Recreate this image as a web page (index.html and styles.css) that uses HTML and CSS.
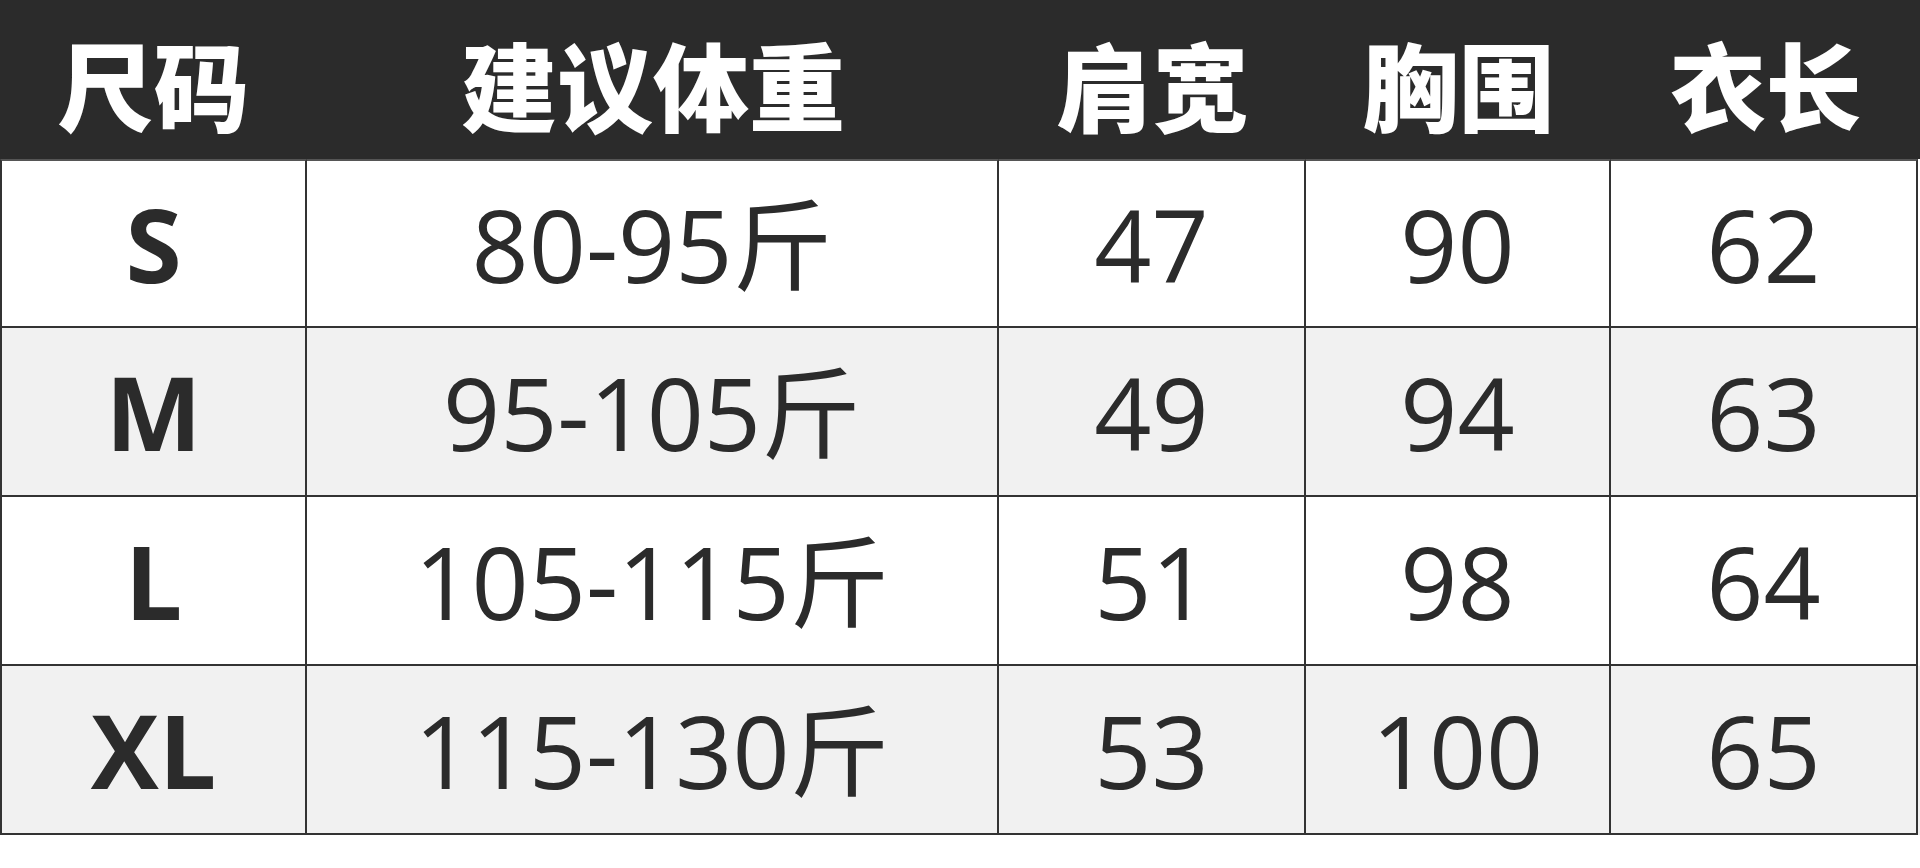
FILE: index.html
```html
<!DOCTYPE html>
<html lang="zh-CN">
<head>
<meta charset="utf-8">
<title>尺码表</title>
<link rel="stylesheet" href="styles.css">
</head>
<body>
<div class="sheet">
  <div class="row head">
    <div class="cell">尺码</div>
    <div class="cell">建议体重</div>
    <div class="cell">肩宽</div>
    <div class="cell">胸围</div>
    <div class="cell">衣长</div>
  </div>
  <div class="row body">
    <div class="cell size">S</div>
    <div class="cell num">80-95斤</div>
    <div class="cell num">47</div>
    <div class="cell num">90</div>
    <div class="cell num">62</div>
  </div>
  <div class="row body alt">
    <div class="cell size">M</div>
    <div class="cell num">95-105斤</div>
    <div class="cell num">49</div>
    <div class="cell num">94</div>
    <div class="cell num">63</div>
  </div>
  <div class="row body">
    <div class="cell size">L</div>
    <div class="cell num">105-115斤</div>
    <div class="cell num">51</div>
    <div class="cell num">98</div>
    <div class="cell num">64</div>
  </div>
  <div class="row body alt">
    <div class="cell size">XL</div>
    <div class="cell num">115-130斤</div>
    <div class="cell num">53</div>
    <div class="cell num">100</div>
    <div class="cell num">65</div>
  </div>
</div>
</body>
</html>
```

FILE: styles.css
```css
html, body {
  margin: 0;
  padding: 0;
  background: #ffffff;
}

.sheet {
  width: 1920px;
  display: flex;
  flex-direction: column;
}

.row {
  display: grid;
  grid-template-columns: 307px 692px 307px 305px 309px;
}

.head {
  height: 159px;
  background: #2b2b2b;
}

.head .cell {
  display: flex;
  align-items: center;
  justify-content: center;
  padding-top: 7px;
  box-sizing: border-box;
  color: #ffffff;
  font-family: "Noto Sans CJK SC", "Noto Sans", sans-serif;
  font-weight: 900;
  font-size: 96px;
  line-height: 1;
}

.body {
  height: 169px;
  background: #ffffff;
}

.body.alt {
  background: #f1f1f1;
}

.body .cell {
  display: flex;
  align-items: center;
  justify-content: center;
  box-sizing: border-box;
  border-right: 2px solid #333333;
  border-bottom: 2px solid #333333;
  color: #2b2b2b;
  line-height: 1;
}

.body .cell:first-child {
  border-left: 2px solid #333333;
}

.body .cell:last-child {
  margin-right: 2px;
}

.head + .body .cell {
  border-top: 2px solid #555555;
}

.size {
  font-family: "Open Sans", "Noto Sans CJK SC", sans-serif;
  font-weight: 700;
  font-size: 102px;
}

.num {
  font-family: "Open Sans", "Noto Sans CJK SC", sans-serif;
  font-weight: 400;
  font-size: 100px;
}
```
